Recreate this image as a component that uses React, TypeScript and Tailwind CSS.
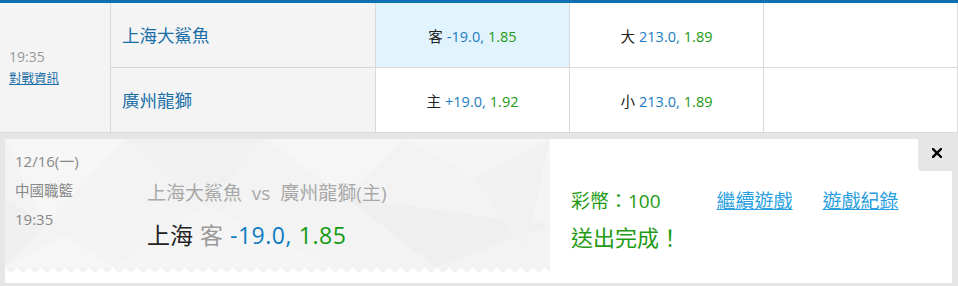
import React from "react";

const FONT = { fontFamily: '"Open Sans", "Noto Sans CJK TC", sans-serif' };

function OddsCell({ label, line, price, active }: { label: string; line: string; price: string; active?: boolean }) {
  return (
    <div
      className={`flex items-center justify-center pt-[3px] border-r border-b border-[#d9d9d9] text-[14.5px] ${
        active ? "bg-[#e1f4fd]" : "bg-white"
      }`}
    >
      <span className="text-[#222]">{label}</span>
      <span className="ml-1 text-[#1c7cc2]">{line},</span>
      <span className="ml-1 text-[#1e9a14]">{price}</span>
    </div>
  );
}

function TicketPattern() {
  return (
    <svg className="absolute inset-0 h-full w-full" viewBox="0 0 545 133" preserveAspectRatio="none">
      <polygon points="0,0 120,0 40,90" fill="#f6f6f6" />
      <polygon points="40,90 0,133 0,60" fill="#f0f0f0" />
      <polygon points="120,0 260,0 200,70" fill="#f1f1f1" />
      <polygon points="200,70 330,133 110,133" fill="#f5f5f5" />
      <polygon points="260,0 400,0 340,60" fill="#f6f6f6" />
      <polygon points="340,60 545,90 430,133" fill="#efefef" />
      <polygon points="400,0 545,0 545,90 470,40" fill="#f5f5f5" />
      <polygon points="470,40 545,0 520,120" fill="#f1f1f1" />
      <polygon points="0,133 60,100 110,133" fill="#f6f6f6" />
    </svg>
  );
}

function Scallops() {
  const n = 46;
  const w = 12;
  let d = "M0,0 ";
  for (let i = 0; i < n; i++) {
    const x = i * w;
    d += `Q${x + w / 2},${10} ${x + w},0 `;
  }
  d += `L${n * w},0 Z`;
  return (
    <svg className="block h-[5px] w-[545px]" viewBox="0 0 545 5" preserveAspectRatio="none">
      <path d={d} fill="#f3f3f3" />
    </svg>
  );
}

export default function App() {
  return (
    <div className="w-[958px] h-[286px] bg-[#e6e6e6] overflow-hidden" style={FONT}>
      <div className="border-t-[3px] border-[#0f70b2] grid grid-cols-[111px_265px_194px_194px_1fr] grid-rows-[65px_65px]">
        <div className="row-span-2 flex flex-col justify-center pl-[9px] bg-[#f4f4f4] border-r border-b border-[#d9d9d9]">
          <span className="text-[14px] text-[#999] leading-[18px]">19:35</span>
          <a href="#" className="mt-[5px] text-[12.5px] text-[#1a6fa8] underline leading-[16px]">
            對戰資訊
          </a>
        </div>
        <div className="flex items-center pl-[11px] bg-[#f4f4f4] border-r border-b border-[#d9d9d9] text-[17.5px] text-[#1a6ea8]">
          上海大鯊魚
        </div>
        <OddsCell label="客" line="-19.0" price="1.85" active />
        <OddsCell label="大" line="213.0" price="1.89" />
        <div className="bg-white border-r border-b border-[#d9d9d9]" />
        <div className="flex items-center pl-[11px] bg-[#f4f4f4] border-r border-b border-[#d9d9d9] text-[17.5px] text-[#1a6ea8]">
          廣州龍獅
        </div>
        <OddsCell label="主" line="+19.0" price="1.92" />
        <OddsCell label="小" line="213.0" price="1.89" />
        <div className="bg-white border-r border-b border-[#d9d9d9]" />
      </div>

      <div className="pt-[6px] pl-[5px]">
        <div className="relative flex w-[947px] h-[144px] bg-white">
          <div className="w-[545px]">
            <div className="relative h-[128px] bg-[#f3f3f3] overflow-hidden">
              <TicketPattern />
              <div className="relative flex">
                <div className="w-[142px] pl-[10px] pt-[8px] flex flex-col text-[#888] leading-[29px]">
                  <span className="text-[15px]">12/16(一)</span>
                  <span className="text-[14.5px]">中國職籃</span>
                  <span className="text-[15px]">19:35</span>
                </div>
                <div className="pt-[42px] flex flex-col">
                  <span className="text-[19px] leading-[24px] text-[#a9a9a9]">
                    上海大鯊魚&nbsp; vs&nbsp; 廣州龍獅(主)
                  </span>
                  <span className="mt-[15px] text-[23px] leading-[30px]">
                    <span className="text-[#222]">上海</span>
                    <span className="ml-[7px] text-[#999]">客</span>
                    <span className="ml-[7px] text-[#0b7cc3] tracking-[0.5px]">-19.0,</span>
                    <span className="ml-[7px] text-[#129a12] tracking-[0.5px]">1.85</span>
                  </span>
                </div>
              </div>
            </div>
            <Scallops />
          </div>

          <div className="pl-[21px] pt-[50px] flex flex-col">
            <div className="flex items-center leading-[24px]">
              <span className="text-[19px] text-[#1e9a14]">彩幣：100</span>
              <a href="#" className="ml-[56px] text-[19px] text-[#2a9fe0] underline">
                繼續遊戲
              </a>
              <a href="#" className="ml-[30px] text-[19px] text-[#2a9fe0] underline">
                遊戲紀錄
              </a>
            </div>
            <span className="mt-[10px] text-[22px] leading-[28px] text-[#1e9a14]">送出完成！</span>
          </div>

          <button className="absolute top-0 right-0 w-[34px] h-[32px] bg-[#e6e6e6] rounded-bl-[4px] flex justify-center pt-[9px] pl-[3px]">
            <svg width="10" height="10" viewBox="0 0 10 10">
              <path d="M1 1L9 9M9 1L1 9" stroke="#000" strokeWidth="2.4" strokeLinecap="square" />
            </svg>
          </button>
        </div>
      </div>
    </div>
  );
}
